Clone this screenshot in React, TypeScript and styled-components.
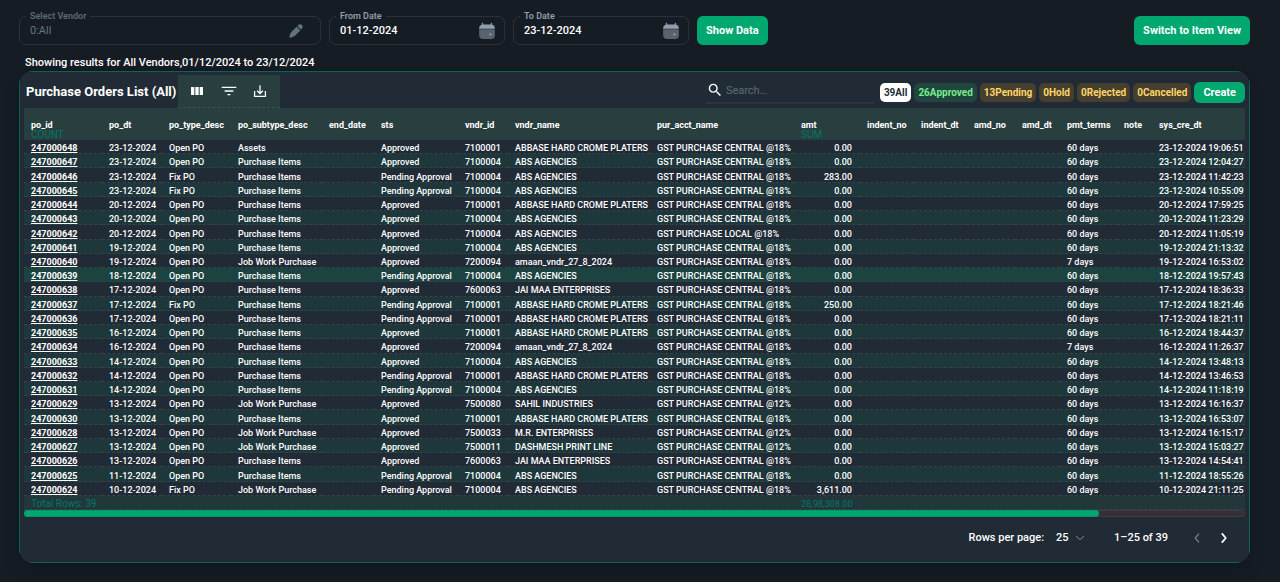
import React from "react";
import styled, { createGlobalStyle } from "styled-components";

const GlobalStyle = createGlobalStyle`
  * { box-sizing: border-box; }
  body {
    margin: 0;
    background: #161c24;
    color: #fff;
    font-family: Roboto, "Liberation Sans", sans-serif;
    font-size: 11px;
  }
  button, input, select { font: inherit; color: inherit; }
  button { cursor: pointer; }
`;

const Page = styled.main`
  padding: 16px 30px 19px 19px;
`;

const FilterBar = styled.form`
  display: flex;
  align-items: center;
  gap: 8px;
`;

const Field = styled.div<{ $width: number; $muted?: boolean }>`
  position: relative;
  display: flex;
  align-items: center;
  flex: 0 1 ${(p) => p.$width}px;
  min-width: 0;
  height: 29px;
  padding: 0 8px 0 10px;
  border: 1px solid #29323c;
  border-radius: 7px;
  color: ${(p) => (p.$muted ? "#637381" : "#fff")};
`;

const FieldLabel = styled.label<{ $muted?: boolean }>`
  position: absolute;
  top: -7px;
  left: 6px;
  padding: 0 4px;
  background: #161c24;
  color: ${(p) => (p.$muted ? "#5c6a77" : "#919eab")};
  font-size: 9px;
  font-weight: 600;
  line-height: 13px;
`;

const FieldInput = styled.input<{ $muted?: boolean }>`
  flex: 1;
  min-width: 0;
  padding: 0;
  border: 0;
  outline: 0;
  background: transparent;
  font-weight: ${(p) => (p.$muted ? 400 : 500)};
`;

const IconButton = styled.button<{ $color?: string; $inset?: number }>`
  display: flex;
  padding: 0;
  margin-right: ${(p) => p.$inset ?? 0}px;
  border: 0;
  background: transparent;
  color: ${(p) => p.$color ?? "#fff"};
`;

const PrimaryButton = styled.button<{ $small?: boolean; $end?: boolean }>`
  height: ${(p) => (p.$small ? 21 : 29)}px;
  margin-left: ${(p) => (p.$end ? "auto" : 0)};
  padding: 0 9px;
  border: 0;
  border-radius: 6px;
  background: #00a76f;
  color: #fff;
  font-weight: 700;
  white-space: nowrap;
`;

const Summary = styled.p`
  margin: 11px 0 1px 6px;
  font-weight: 500;
  line-height: 14px;
`;

const Card = styled.section`
  overflow: hidden;
  border-radius: 14px;
  background: #212b36;
  box-shadow: 0 0 2px rgba(0, 0, 0, 0.2), 0 10px 20px -4px rgba(0, 0, 0, 0.2);
`;

const CardFrame = styled.div`
  padding: 0 4px;
  border: 1px solid #0d6353;
`;

const CardHeader = styled.header`
  display: flex;
  align-items: center;
  height: 36px;
  padding-top: 4px;
`;

const Title = styled.h1`
  margin: 0 2px;
  font-size: 13px;
  font-weight: 700;
  line-height: 16px;
  white-space: nowrap;
`;

const TableTools = styled.div`
  display: flex;
  align-items: center;
  align-self: flex-end;
  gap: 16px;
  height: 33px;
  padding: 0 13px 0 11px;
  border-bottom: 1px dashed #3c5154;
  background: #283e3f;
`;

const SearchBox = styled.label`
  display: flex;
  align-items: center;
  gap: 4px;
  width: 168px;
  height: 23px;
  margin: 0 6px 0 auto;
  padding: 0 2px 2px;
  border-bottom: 2px solid #2c3640;
`;

const SearchInput = styled.input`
  flex: 1;
  min-width: 0;
  padding: 0;
  border: 0;
  outline: 0;
  background: transparent;
  &::placeholder { color: #5d6b78; opacity: 1; }
`;

const tones = {
  all: ["#ffffff", "#212b36"],
  success: ["#21453f", "#77ed8b"],
  warning: ["#463f2f", "#ffd666"],
};

const ChipRow = styled.div`
  display: flex;
  align-items: center;
  gap: 3px;
`;

const Chip = styled.button<{ $tone: keyof typeof tones }>`
  height: 19px;
  padding: 0 4px;
  border: 0;
  border-radius: 5px;
  background: ${(p) => tones[p.$tone][0]};
  color: ${(p) => tones[p.$tone][1]};
  font-size: 10px;
  font-weight: 700;
  white-space: nowrap;
`;

const TableViewport = styled.div`
  overflow: hidden;
`;

const Table = styled.table`
  width: 114%;
  height: 402px;
  border-collapse: separate;
  border-spacing: 0;
  table-layout: fixed;
  font-size: 9px;
  line-height: 10px;
`;

const HeadCell = styled.th`
  height: 32px;
  padding: 13px 0 0 7px;
  background: #283e3f;
  font-weight: 700;
  line-height: 9px;
  text-align: left;
  vertical-align: top;
  white-space: nowrap;
`;

const Aggregate = styled.span`
  display: block;
  color: #007867;
  font-size: 10px;
  font-weight: 400;
`;

const Row = styled.tr<{ $active?: boolean }>`
  background: ${(p) => (p.$active ? "#1b4441" : "#212b36")};
  &:nth-child(even) { background: ${(p) => (p.$active ? "#1b4441" : "#1e373b")}; }
`;

const Cell = styled.td<{ $numeric?: boolean }>`
  height: 14px;
  padding: 3px ${(p) => (p.$numeric ? 8 : 0)}px 0 7px;
  border-bottom: 1px dashed #34434a;
  font-weight: 500;
  text-align: ${(p) => (p.$numeric ? "right" : "left")};
  white-space: nowrap;
`;

const FootCell = styled(Cell)`
  background: #22373a;
  color: #007867;
  font-size: ${(p) => (p.$numeric ? 9 : 10)}px;
  font-weight: 400;
`;

const OrderLink = styled.a`
  color: #fff;
  font-weight: 700;
`;

const ScrollTrack = styled.div`
  height: 7px;
  border: 1px solid #45383f;
  border-radius: 3px;
  background: #352f38;
`;

const ScrollThumb = styled.div`
  width: 88%;
  height: 5px;
  border-radius: 2px;
  background: #00a76f;
  box-shadow: 0 0 0 1px #06966a;
`;

const Pagination = styled.footer`
  display: flex;
  align-items: center;
  justify-content: flex-end;
  height: 45px;
  padding: 0 14px 4px 0;
  font-weight: 500;
`;

const PageSize = styled.label`
  display: flex;
  align-items: center;
  gap: 12px;
`;

const SelectWrap = styled.span`
  display: flex;
  align-items: center;
  gap: 6px;
  color: #fff;
`;

const Select = styled.select`
  padding: 0;
  border: 0;
  appearance: none;
  background: transparent;
  font-weight: 500;
`;

const PageRange = styled.span`
  margin: 0 22px 0 29px;
`;

const Pager = styled.nav`
  display: flex;
  gap: 13px;
`;

const PencilIcon = () => (
  <svg width="16" height="16" viewBox="0 0 24 24" fill="currentColor" aria-hidden="true">
    <path d="m11.4 18.161 7.396-7.396a10.3 10.3 0 0 1-3.326-2.234 10.3 10.3 0 0 1-2.235-3.327L5.839 12.6c-.577.577-.866.866-1.114 1.184a6.6 6.6 0 0 0-.749 1.211c-.173.364-.302.752-.56 1.526l-1.362 4.083a1.06 1.06 0 0 0 1.342 1.342l4.083-1.362c.775-.258 1.162-.387 1.526-.56q.647-.308 1.211-.749c.318-.248.607-.537 1.184-1.114m9.448-9.448a3.932 3.932 0 0 0-5.561-5.561l-.887.887.038.111a8.75 8.75 0 0 0 2.092 3.32 8.75 8.75 0 0 0 3.431 2.13z" />
  </svg>
);

const CalendarIcon = () => (
  <svg width="18" height="18" viewBox="0 0 24 24" fill="currentColor" aria-hidden="true">
    <path opacity=".55" d="M1.500 9.500h21V17c0 4-1.500 5.500-5.500 5.500H7c-4 0-5.500-1.500-5.500-5.500z" />
    <path d="M6 1c.5 0 .9.4.9.9V3.200h10.200V1.900a.9.900 0 0 1 1.800 0V3.500C21.500 4 22.500 5.500 22.500 9h-21c0-3.500 1-5 3.600-5.500V1.900c0-.5.4-.9.900-.9z" />
    <circle cx="16.500" cy="16.500" r="1.500" />
  </svg>
);

const ColumnsIcon = () => (
  <svg width="16" height="16" viewBox="0 0 24 24" fill="currentColor" aria-hidden="true">
    <path d="M3 6h5v12H3zM9.500 6h5v12h-5zM16 6h5v12h-5z" />
  </svg>
);

const FilterIcon = () => (
  <svg width="16" height="16" viewBox="1 1 22 22" fill="currentColor" aria-hidden="true">
    <path d="M10 18h4v-2h-4v2zM2 6v2h20V6H2zm4 7h12v-2H6v2z" />
  </svg>
);

const ExportIcon = () => (
  <svg width="14" height="14" viewBox="1 1 22 22" fill="none" stroke="currentColor" strokeWidth="2" aria-hidden="true">
    <path d="M3.500 12v8.500h17V12M12 3v13M7.500 11.500 12 16l4.500-4.500" />
  </svg>
);

const SearchIcon = () => (
  <svg width="14" height="14" viewBox="2 2 20 20" fill="currentColor" aria-hidden="true">
    <path d="M15.500 14h-.790l-.280-.270A6.471 6.471 0 0 0 16 9.500 6.500 6.500 0 1 0 9.500 16c1.610 0 3.090-.590 4.230-1.570l.270.280v.790l5 4.990L20.490 19l-4.990-5zm-6 0C7.010 14 5 11.990 5 9.500S7.010 5 9.500 5 14 7.010 14 9.500 11.990 14 9.500 14z" />
  </svg>
);

const Chevron = ({ d, size = 14, width = 3 }: { d: string; size?: number; width?: number }) => (
  <svg width={size} height={size} viewBox="0 0 24 24" fill="none" stroke="currentColor" strokeWidth={width} strokeLinecap="round" strokeLinejoin="round" aria-hidden="true">
    <path d={d} />
  </svg>
);

const columns: { name: string; width?: number; aggregate?: string }[] = [
  { name: "po_id", width: 78, aggregate: "COUNT" },
  { name: "po_dt", width: 60 },
  { name: "po_type_desc", width: 69 },
  { name: "po_subtype_desc", width: 91 },
  { name: "end_date", width: 52 },
  { name: "sts", width: 84 },
  { name: "vndr_id", width: 50 },
  { name: "vndr_name", width: 142 },
  { name: "pur_acct_name", width: 144 },
  { name: "amt", width: 66, aggregate: "SUM" },
  { name: "indent_no", width: 54 },
  { name: "indent_dt", width: 53 },
  { name: "amd_no", width: 48 },
  { name: "amd_dt", width: 45 },
  { name: "pmt_terms", width: 57 },
  { name: "note", width: 35 },
  { name: "sys_cre_dt" },
];

const vendors: Record<string, string> = {
  "7100001": "ABBASE HARD CROME PLATERS",
  "7100004": "ABS AGENCIES",
  "7200094": "amaan_vndr_27_8_2024",
  "7600063": "JAI MAA ENTERPRISES",
  "7500080": "SAHIL INDUSTRIES",
  "7500033": "M.R. ENTERPRISES",
  "7500011": "DASHMESH PRINT LINE",
};

const C18 = "CENTRAL @18%";
const C12 = "CENTRAL @12%";
const ITEMS = "Purchase Items";
const JOB = "Job Work Purchase";
const OK = "Approved";
const WAIT = "Pending Approval";

// id, date, type, subtype, status, vendor, account, amount, terms in days, creation time
type Order = [number, string, string, string, string, string, string, string, number, string];

const orders: Order[] = [
  [247000648, "23-12-2024", "Open PO", "Assets", OK, "7100001", C18, "0.00", 60, "19:06:51"],
  [247000647, "23-12-2024", "Open PO", ITEMS, OK, "7100004", C18, "0.00", 60, "12:04:27"],
  [247000646, "23-12-2024", "Fix PO", ITEMS, WAIT, "7100004", C18, "283.00", 60, "11:42:23"],
  [247000645, "23-12-2024", "Fix PO", ITEMS, WAIT, "7100004", C18, "0.00", 60, "10:55:09"],
  [247000644, "20-12-2024", "Open PO", ITEMS, OK, "7100001", C18, "0.00", 60, "17:59:25"],
  [247000643, "20-12-2024", "Open PO", ITEMS, OK, "7100004", C18, "0.00", 60, "11:23:29"],
  [247000642, "20-12-2024", "Open PO", ITEMS, OK, "7100004", "LOCAL @18%", "0.00", 60, "11:05:19"],
  [247000641, "19-12-2024", "Open PO", ITEMS, OK, "7100004", C18, "0.00", 60, "21:13:32"],
  [247000640, "19-12-2024", "Open PO", JOB, OK, "7200094", C18, "0.00", 7, "16:53:02"],
  [247000639, "18-12-2024", "Open PO", ITEMS, WAIT, "7100004", C18, "0.00", 60, "19:57:43"],
  [247000638, "17-12-2024", "Open PO", ITEMS, OK, "7600063", C18, "0.00", 60, "18:36:33"],
  [247000637, "17-12-2024", "Fix PO", ITEMS, WAIT, "7100001", C18, "250.00", 60, "18:21:46"],
  [247000636, "17-12-2024", "Open PO", ITEMS, WAIT, "7100001", C18, "0.00", 60, "18:21:11"],
  [247000635, "16-12-2024", "Open PO", ITEMS, OK, "7100001", C18, "0.00", 60, "18:44:37"],
  [247000634, "16-12-2024", "Open PO", ITEMS, OK, "7200094", C18, "0.00", 7, "11:26:37"],
  [247000633, "14-12-2024", "Open PO", ITEMS, OK, "7100004", C18, "0.00", 60, "13:48:13"],
  [247000632, "14-12-2024", "Open PO", ITEMS, WAIT, "7100001", C18, "0.00", 60, "13:46:53"],
  [247000631, "14-12-2024", "Open PO", ITEMS, WAIT, "7100004", C18, "0.00", 60, "11:18:19"],
  [247000629, "13-12-2024", "Open PO", JOB, OK, "7500080", C12, "0.00", 60, "16:16:37"],
  [247000630, "13-12-2024", "Open PO", ITEMS, OK, "7100001", C18, "0.00", 60, "16:53:07"],
  [247000628, "13-12-2024", "Open PO", JOB, OK, "7500033", C12, "0.00", 60, "16:15:17"],
  [247000627, "13-12-2024", "Open PO", JOB, OK, "7500011", C12, "0.00", 60, "15:03:27"],
  [247000626, "13-12-2024", "Open PO", ITEMS, OK, "7600063", C18, "0.00", 60, "14:54:41"],
  [247000625, "11-12-2024", "Open PO", ITEMS, WAIT, "7100004", C18, "0.00", 60, "18:55:26"],
  [247000624, "10-12-2024", "Fix PO", JOB, WAIT, "7100004", C18, "3,611.00", 60, "21:11:25"],
];

const ACTIVE_ORDER = 247000639;

const statuses: [number, string, keyof typeof tones][] = [
  [39, "All", "all"],
  [26, "Approved", "success"],
  [13, "Pending", "warning"],
  [0, "Hold", "warning"],
  [0, "Rejected", "warning"],
  [0, "Cancelled", "warning"],
];

const OrderRow = ({ order }: { order: Order }) => {
  const [id, date, type, subtype, status, vendor, account, amount, days, time] = order;
  return (
    <Row $active={id === ACTIVE_ORDER}>
      <Cell><OrderLink href={`#${id}`}>{id}</OrderLink></Cell>
      <Cell>{date}</Cell>
      <Cell>{type}</Cell>
      <Cell>{subtype}</Cell>
      <Cell />
      <Cell>{status}</Cell>
      <Cell>{vendor}</Cell>
      <Cell>{vendors[vendor]}</Cell>
      <Cell>GST PURCHASE {account}</Cell>
      <Cell $numeric>{amount}</Cell>
      <Cell />
      <Cell />
      <Cell />
      <Cell />
      <Cell>{days} days</Cell>
      <Cell />
      <Cell>{date} {time}</Cell>
    </Row>
  );
};

const DateField = ({ id, label, value }: { id: string; label: string; value: string }) => (
  <Field $width={176}>
    <FieldLabel htmlFor={id}>{label}</FieldLabel>
    <FieldInput id={id} defaultValue={value} />
    <IconButton type="button" $color="#919eab" aria-label={`Choose ${label}`}><CalendarIcon /></IconButton>
  </Field>
);

export default function App() {
  return (
    <>
      <GlobalStyle />
      <Page>
        <FilterBar onSubmit={(e) => e.preventDefault()}>
          <Field $width={302} $muted>
            <FieldLabel $muted htmlFor="vendor">Select Vendor</FieldLabel>
            <FieldInput $muted id="vendor" defaultValue="0:All" />
            <IconButton type="button" $color="#637381" $inset={8} aria-label="Edit vendor"><PencilIcon /></IconButton>
          </Field>
          <DateField id="from" label="From Date" value="01-12-2024" />
          <DateField id="to" label="To Date" value="23-12-2024" />
          <PrimaryButton type="submit">Show Data</PrimaryButton>
          <PrimaryButton type="button" $end>Switch to Item View</PrimaryButton>
        </FilterBar>

        <Summary>Showing results for All Vendors,01/12/2024 to 23/12/2024</Summary>

        <Card>
          <CardFrame>
            <CardHeader>
              <Title>Purchase Orders List (All)</Title>
              <TableTools>
                <IconButton aria-label="Columns"><ColumnsIcon /></IconButton>
                <IconButton aria-label="Filters"><FilterIcon /></IconButton>
                <IconButton aria-label="Export"><ExportIcon /></IconButton>
              </TableTools>
              <SearchBox>
                <SearchIcon />
                <SearchInput placeholder="Search…" aria-label="Search" />
              </SearchBox>
              <ChipRow>
                {statuses.map(([count, label, tone]) => (
                  <Chip key={label} $tone={tone}>{count}{label}</Chip>
                ))}
                <PrimaryButton $small>Create</PrimaryButton>
              </ChipRow>
            </CardHeader>

            <TableViewport>
              <Table>
                <colgroup>
                  {columns.map((c) => <col key={c.name} width={c.width} />)}
                </colgroup>
                <thead>
                  <tr>
                    {columns.map((c) => (
                      <HeadCell key={c.name} scope="col">
                        {c.name}
                        {c.aggregate && <Aggregate>{c.aggregate}</Aggregate>}
                      </HeadCell>
                    ))}
                  </tr>
                </thead>
                <tbody>
                  {orders.map((o) => <OrderRow key={o[0]} order={o} />)}
                </tbody>
                <tfoot>
                  <tr>
                    <FootCell colSpan={9}>Total Rows: 39</FootCell>
                    <FootCell $numeric>28,98,308.00</FootCell>
                    <FootCell colSpan={7} />
                  </tr>
                </tfoot>
              </Table>
            </TableViewport>
            <ScrollTrack><ScrollThumb /></ScrollTrack>

            <Pagination>
              <PageSize>
                Rows per page:
                <SelectWrap>
                  <Select defaultValue="25">
                    <option>25</option>
                    <option>50</option>
                  </Select>
                  <IconButton as="span" $color="#919eab"><Chevron size={10} width={2} d="M3 8l9 8 9-8" /></IconButton>
                </SelectWrap>
              </PageSize>
              <PageRange>1–25 of 39</PageRange>
              <Pager aria-label="Pages">
                <IconButton disabled $color="#75828f" aria-label="Previous page"><Chevron width={2} d="M15 5l-6 7 6 7" /></IconButton>
                <IconButton aria-label="Next page"><Chevron d="M9 5l6 7-6 7" /></IconButton>
              </Pager>
            </Pagination>
          </CardFrame>
        </Card>
      </Page>
    </>
  );
}
